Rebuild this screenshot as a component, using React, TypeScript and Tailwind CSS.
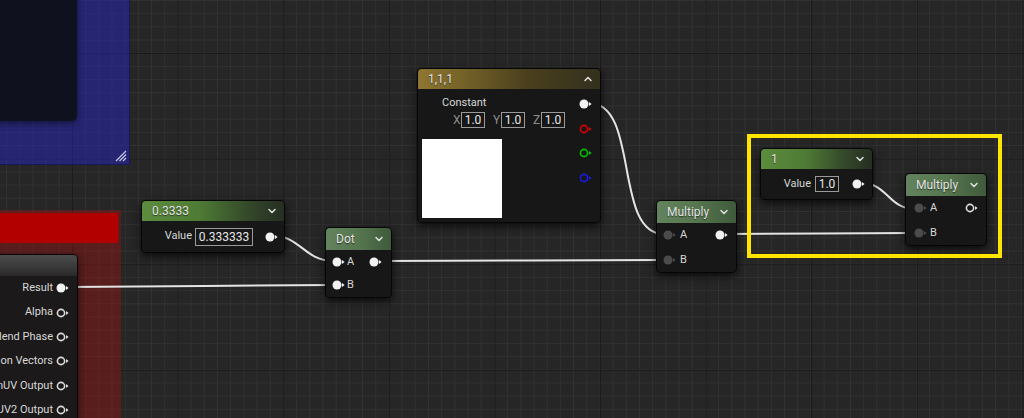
import { ChevronDown, ChevronUp } from "lucide-react";
import type { ReactNode } from "react";

type PinKind = "white" | "hollow" | "gray" | "red" | "green" | "blue";

const pinColors: Record<PinKind, string> = {
  white: "#f2f2f2",
  hollow: "#dcdcdc",
  gray: "#4b4b4b",
  red: "#e00000",
  green: "#00c400",
  blue: "#1a1ae8",
};

function Pin({ kind }: { kind: PinKind }) {
  const color = pinColors[kind];
  const filled = kind === "white" || kind === "gray";
  return (
    <svg width="13" height="10" viewBox="0 0 13 10" className="shrink-0">
      {filled ? (
        <circle cx="5" cy="5" r="4.5" fill={color} />
      ) : (
        <circle cx="5" cy="5" r="3.6" fill="none" stroke={color} strokeWidth="1.6" />
      )}
      <path d="M10 3 L12.6 5 L10 7 Z" fill={color} />
    </svg>
  );
}

function Node({
  className,
  title,
  header,
  up,
  children,
}: {
  className: string;
  title: string;
  header: string;
  up?: boolean;
  children: ReactNode;
}) {
  return (
    <div
      className={`absolute flex flex-col rounded-[5px] border border-black/70 bg-[#161716] shadow-[0_3px_8px_rgba(0,0,0,0.75)] ${className}`}
    >
      <div
        className={`flex shrink-0 items-center justify-between rounded-t-[4px] pl-[10px] pr-[6px] text-[12px] text-[#e4e4e4] ${header}`}
      >
        <span className="[text-shadow:0_1px_1px_rgba(0,0,0,0.6)]">{title}</span>
        {up ? (
          <ChevronUp size={12} strokeWidth={3} className="text-[#e0e0e0]" />
        ) : (
          <ChevronDown size={12} strokeWidth={3} className="text-[#e0e0e0]" />
        )}
      </div>
      {children}
    </div>
  );
}

function ValueBox({ value, className }: { value: string; className: string }) {
  return (
    <div
      className={`flex items-center justify-center border border-[#9a9a9a] text-[12px] leading-none text-[#e6e6e6] ${className}`}
    >
      {value}
    </div>
  );
}

const green = "bg-[linear-gradient(to_right,#5c8c3d,#4e7b35_40%,#34482a_75%,#262e22)]";
const mathGreen = "bg-[linear-gradient(to_right,#62835d,#56764f_50%,#3f5a3b)]";

const outputs = [
  { label: "Result", kind: "white" as PinKind },
  { label: "Alpha", kind: "hollow" as PinKind },
  { label: "Blend Phase", kind: "hollow" as PinKind },
  { label: "Distortion Vectors", kind: "hollow" as PinKind },
  { label: "CustomUV Output", kind: "hollow" as PinKind },
  { label: "CustomUV2 Output", kind: "hollow" as PinKind },
];

export default function App() {
  return (
    <div className="relative h-[418px] w-[1024px] overflow-hidden bg-[#262626] bg-[linear-gradient(to_right,#1b1b1b_1px,transparent_1px),linear-gradient(to_bottom,#1b1b1b_1px,transparent_1px),linear-gradient(to_right,#313131_1px,transparent_1px),linear-gradient(to_bottom,#313131_1px,transparent_1px)] bg-size-[105.6px_105.6px,105.6px_105.6px,13.2px_13.2px,13.2px_13.2px] bg-position-[72px_53px,72px_53px,6px_0px,6px_0px] font-['Roboto',sans-serif]">
      {/* blue comment */}
      <div className="absolute left-[-20px] top-[-20px] h-[185px] w-[150px] border-b border-r border-[#17175a] bg-[rgba(35,35,190,0.5)]">
        <div className="absolute left-0 top-0 h-[141px] w-[97px] rounded-br-[5px] bg-[#0e1019]/95 shadow-[0_2px_6px_rgba(0,0,0,0.5)]" />
        <svg width="12" height="12" viewBox="0 0 12 12" className="absolute bottom-[2px] right-[2px]">
          <path d="M11 1 L1 11 M11 4.5 L4.5 11 M11 8 L8 11" stroke="#c4c4e4" strokeWidth="1.3" />
        </svg>
      </div>

      {/* red comment */}
      <div className="absolute left-[-20px] top-[210px] flex h-[230px] w-[141px] flex-col bg-[rgba(150,20,20,0.45)]">
        <div className="mt-[3px] h-[30px] w-[138px] bg-[#b20000]" />
      </div>

      {/* wires */}
      <svg className="pointer-events-none absolute inset-0 h-full w-full" viewBox="0 0 1024 418">
        <g fill="none" stroke="#e4e4e4" strokeWidth="2">
          <path d="M66 287 C160 287, 240 285, 333 285" />
          <path d="M274 236 C300 236, 305 261, 333 261" />
          <path d="M379 261 C500 261, 550 260, 664 260" />
          <path d="M589 103 C640 103, 613 234, 664 234" />
          <path d="M724 234 C800 234, 840 233, 915 233" />
          <path d="M861 183 C888 183, 888 209, 915 209" />
        </g>
      </svg>

      {/* output node in red comment */}
      <div className="absolute left-[-100px] top-[254px] flex h-[200px] w-[178px] flex-col rounded-tr-[5px] border border-black/70 bg-[#1b1919] shadow-[0_3px_8px_rgba(0,0,0,0.6)]">
        <div className="h-[21px] shrink-0 rounded-tr-[4px] bg-[linear-gradient(to_bottom,#4c4c4c,#2a2a2a)]" />
        {outputs.map((o) => (
          <div key={o.label} className="flex h-[24.4px] items-center justify-end pr-[8px] text-[11px] text-[#d8d8d8]">
            <span className="mr-[3px] whitespace-nowrap">{o.label}</span>
            <Pin kind={o.kind} />
          </div>
        ))}
      </div>

      {/* 0.3333 */}
      <Node className="left-[141px] top-[200px] h-[53px] w-[144px]" title="0.3333" header={`h-[20px] ${green}`}>
        <div className="flex flex-1 items-center justify-end pr-[6px] text-[11px] text-[#d8d8d8]">
          <span className="mr-[3px]">Value</span>
          <ValueBox value="0.333333" className="h-[18px] w-[58px]" />
          <span className="ml-[12px]">
            <Pin kind="white" />
          </span>
        </div>
      </Node>

      {/* Dot */}
      <Node className="left-[325px] top-[227px] h-[71px] w-[67px]" title="Dot" header={`h-[22px] ${mathGreen}`}>
        <div className="flex h-[24px] items-center pl-[6px] pr-[9px] text-[11px] text-[#d8d8d8]">
          <Pin kind="white" />
          <span className="ml-[2px] flex-1">A</span>
          <Pin kind="white" />
        </div>
        <div className="flex h-[24px] items-center pl-[6px] text-[11px] text-[#d8d8d8]">
          <Pin kind="white" />
          <span className="ml-[2px]">B</span>
        </div>
      </Node>

      {/* Constant 1,1,1 */}
      <Node
        className="left-[417px] top-[68px] h-[155px] w-[184px]"
        title="1,1,1"
        up
        header="h-[20px] bg-[linear-gradient(to_right,#8e7731,#6e5d26_30%,#4a3f1d_60%,#33301f)]"
      >
        <div className="flex flex-1">
          <div className="flex flex-1 flex-col">
            <div className="mt-[7px] pl-[24px] text-[11px] leading-[14px] text-[#d8d8d8]">Constant</div>
            <div className="mt-[2px] flex h-[16px] items-center pl-[35px] text-[12px] text-[#8c8c8c]">
              <span className="w-[8px]">X</span>
              <ValueBox value="1.0" className="h-[16px] w-[24px]" />
              <span className="ml-[8px] w-[8px]">Y</span>
              <ValueBox value="1.0" className="h-[16px] w-[24px]" />
              <span className="ml-[8px] w-[8px]">Z</span>
              <ValueBox value="1.0" className="h-[16px] w-[24px]" />
            </div>
            <div className="ml-[4px] mt-[11px] h-[79px] w-[80px] bg-white" />
          </div>
          <div className="flex flex-col gap-[14.5px] pr-[8px] pt-[10px]">
            <Pin kind="white" />
            <Pin kind="red" />
            <Pin kind="green" />
            <Pin kind="blue" />
          </div>
        </div>
      </Node>

      {/* Multiply 1 */}
      <Node className="left-[656px] top-[200px] h-[73px] w-[81px]" title="Multiply" header={`h-[22px] ${mathGreen}`}>
        <div className="flex h-[25px] items-center pl-[6px] pr-[8px] text-[11px] text-[#d8d8d8]">
          <Pin kind="gray" />
          <span className="ml-[4px] flex-1">A</span>
          <Pin kind="white" />
        </div>
        <div className="flex h-[25px] items-center pl-[6px] text-[11px] text-[#d8d8d8]">
          <Pin kind="gray" />
          <span className="ml-[4px]">B</span>
        </div>
      </Node>

      {/* 1 */}
      <Node className="left-[760px] top-[148px] h-[52px] w-[113px]" title="1" header={`h-[20px] ${green}`}>
        <div className="flex flex-1 items-center justify-end pr-[7px] text-[11px] text-[#d8d8d8]">
          <span className="mr-[4px]">Value</span>
          <ValueBox value="1.0" className="h-[16px] w-[24px]" />
          <span className="ml-[13px]">
            <Pin kind="white" />
          </span>
        </div>
      </Node>

      {/* Multiply 2 */}
      <Node className="left-[905px] top-[173px] h-[73px] w-[82px]" title="Multiply" header={`h-[22px] ${mathGreen}`}>
        <div className="flex h-[25px] items-center pl-[8px] pr-[8px] text-[11px] text-[#d8d8d8]">
          <Pin kind="gray" />
          <span className="ml-[3px] flex-1">A</span>
          <Pin kind="hollow" />
        </div>
        <div className="flex h-[25px] items-center pl-[8px] text-[11px] text-[#d8d8d8]">
          <Pin kind="gray" />
          <span className="ml-[3px]">B</span>
        </div>
      </Node>

      {/* selection */}
      <div className="absolute left-[747px] top-[134px] h-[124px] w-[255px] border-4 border-[#ffe600]" />
    </div>
  );
}
